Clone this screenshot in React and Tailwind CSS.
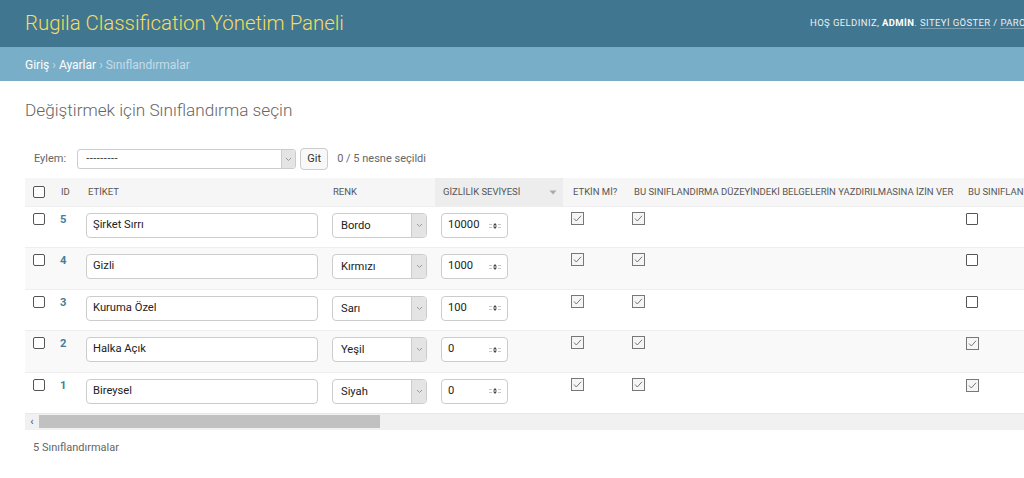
const rows = [
  { id: 5, label: 'Şirket Sırrı', color: 'Bordo', level: '10000', last: false },
  { id: 4, label: 'Gizli', color: 'Kırmızı', level: '1000', last: false },
  { id: 3, label: 'Kuruma Özel', color: 'Sarı', level: '100', last: false },
  { id: 2, label: 'Halka Açık', color: 'Yeşil', level: '0', last: true },
  { id: 1, label: 'Bireysel', color: 'Siyah', level: '0', last: true },
];

function Box() {
  return <div className="w-[12px] h-[12px] border border-[#555] rounded-[2px] bg-white" />;
}

function Checked({ on = true }) {
  if (!on) return <div className="w-[12px] h-[12px] border border-[#555] rounded-[1px] bg-white" />;
  return (
    <svg width="13" height="13" viewBox="0 0 13 13">
      <rect x="0.5" y="0.5" width="12" height="12" fill="#f5f5f5" stroke="#777" />
      <path d="M3 6.5 L5.3 9 L10 3.8" fill="none" stroke="#777" strokeWidth="1" />
    </svg>
  );
}

function Chevron() {
  return (
    <svg width="7" height="5" viewBox="0 0 7 5">
      <path d="M1 1 L3.5 3.5 L6 1" fill="none" stroke="#9a9a9a" strokeWidth="1" />
    </svg>
  );
}

function Spinner() {
  return (
    <svg width="12" height="8" viewBox="0 0 12 8">
      <path d="M4 3.4 L6 1 L8 3.4 Z" fill="#444" />
      <path d="M4 4.6 L6 7 L8 4.6 Z" fill="#444" />
      <rect x="0" y="2" width="3" height="1" fill="#c8c8c8" />
      <rect x="0" y="5" width="3" height="1" fill="#c8c8c8" />
      <rect x="9" y="2" width="3" height="1" fill="#c8c8c8" />
      <rect x="9" y="5" width="3" height="1" fill="#c8c8c8" />
    </svg>
  );
}

export default function App() {
  return (
    <div
      className="w-[1024px] h-[478px] overflow-hidden bg-white text-[#333]"
      style={{ fontFamily: 'Roboto, "Liberation Sans", sans-serif' }}
    >
      {/* Header */}
      <div className="h-[47px] bg-[#417690] flex items-center pl-[25px]">
        <div className="text-[20.4px] font-light text-[#f5dd5d] leading-none whitespace-nowrap">
          Rugila Classification Yönetim Paneli
        </div>
        <div className="ml-auto w-[214px] overflow-hidden whitespace-nowrap text-[9.5px] tracking-[0.4px] uppercase text-[#eeeeee] pb-[1px]">
          HOŞ GELDINIZ, <strong className="font-bold text-white">ADMİN</strong>.{' '}
          <span className="border-b border-[rgba(255,255,255,0.3)]">SITEYİ GÖSTER</span> /{' '}
          <span className="border-b border-[rgba(255,255,255,0.3)]">PAROLAYI DEĞİŞTİR</span> /{' '}
          <span>OTURUMU KAPAT</span>
        </div>
      </div>

      {/* Breadcrumbs */}
      <div className="h-[34px] bg-[#79aec8] flex items-center px-[25px] pt-[1px] text-[12px] text-[#c4dce8] whitespace-nowrap">
        <span className="text-white">Giriş</span>
        <span className="mx-[3px]">›</span>
        <span className="text-white">Ayarlar</span>
        <span className="mx-[3px]">›</span>
        <span>Sınıflandırmalar</span>
      </div>

      {/* Content */}
      <div className="pl-[25px]">
        <h1 className="mt-[17px] h-[24px] leading-[24px] text-[17.2px] font-light text-[#666]">
          Değiştirmek için Sınıflandırma seçin
        </h1>

        {/* Actions */}
        <div className="mt-[26px] h-[22px] flex items-center pl-[9px] text-[11px] text-[#666]">
          <span>Eylem:</span>
          <div className="ml-[11px] w-[219px] h-[20px] border border-[#cccccc] rounded-[3px] flex items-center bg-white">
            <span className="pl-[8px] text-[#333] text-[11px] tracking-[0.5px]">---------</span>
            <div className="ml-auto w-[14px] h-full bg-[#e4e4e4] border-l border-[#cccccc] rounded-r-[3px] flex items-center justify-center">
              <Chevron />
            </div>
          </div>
          <div className="ml-[4px] w-[28px] h-[22px] border border-[#cccccc] rounded-[4px] bg-[#f8f8f8] flex items-center justify-center text-[#333] text-[11px]">
            Git
          </div>
          <span className="ml-[9px]">0 / 5 nesne seçildi</span>
        </div>

        {/* Table */}
        <div className="mt-[8px] w-[999px] overflow-hidden">
          <div className="w-[1140px]">
            <div className="h-[28px] flex bg-[#f6f6f6] text-[9.5px] uppercase text-[#555] whitespace-nowrap">
              <div className="w-[27px] flex items-center pl-[8px]"><Box /></div>
              <div className="w-[28px] flex items-center pl-[9px]">ID</div>
              <div className="w-[245px] flex items-center pl-[8px]">ETİKET</div>
              <div className="w-[110px] flex items-center pl-[8px]">RENK</div>
              <div className="w-[128px] flex items-center pl-[8px] bg-[#ededed] relative">
                GİZLİLİK SEVİYESİ
                <svg className="absolute left-[114px] top-[12px]" width="8" height="5" viewBox="0 0 8 5">
                  <path d="M0.5 0.5 L7.5 0.5 L4 4.5 Z" fill="#aaaaaa" />
                </svg>
              </div>
              <div className="w-[61px] flex items-center pl-[10px]">ETKİN Mİ?</div>
              <div className="w-[334px] flex items-center pl-[10px]">BU SINIFLANDIRMA DÜZEYİNDEKİ BELGELERİN YAZDIRILMASINA İZİN VER</div>
              <div className="w-[200px] flex items-center pl-[10px]">BU SINIFLANDIRMA DÜZEYİNDEKİ</div>
            </div>

            {rows.map((r, i) => (
              <div
                key={r.id}
                className={`h-[41.4px] flex border-t border-[#eeeeee] text-[11.2px] ${i % 2 === 1 ? 'bg-[#f9f9f9]' : 'bg-white'}`}
              >
                <div className="w-[27px] pl-[8px] pt-[6px]"><Box /></div>
                <div className="w-[28px] pl-[8px] pt-[5px] font-bold text-[#447e9b]">{r.id}</div>
                <div className="w-[245px] pl-[6px] pt-[6px]">
                  <div className="w-[232px] h-[25px] border border-[#cccccc] rounded-[4px] bg-white flex items-center pl-[6px] text-[#222]">
                    {r.label}
                  </div>
                </div>
                <div className="w-[110px] pl-[7px] pt-[6px]">
                  <div className="w-[95px] h-[25px] border border-[#cccccc] rounded-[4px] bg-white flex items-center">
                    <span className="pl-[8px] pt-[2px] text-[#222]">{r.color}</span>
                    <div className="ml-auto w-[15px] h-full bg-[#e4e4e4] border-l border-[#cccccc] rounded-r-[4px] flex items-center justify-center">
                      <Chevron />
                    </div>
                  </div>
                </div>
                <div className="w-[128px] pl-[6px] pt-[6px]">
                  <div className="w-[67px] h-[25px] border border-[#cccccc] rounded-[4px] bg-white flex items-center pl-[6px] pr-[6px] text-[#222]">
                    <span>{r.level}</span>
                    <span className="ml-auto flex items-center"><Spinner /></span>
                  </div>
                </div>
                <div className="w-[61px] pl-[8px] pt-[5px]"><Checked /></div>
                <div className="w-[334px] pl-[8px] pt-[5px]"><Checked /></div>
                <div className="w-[200px] pl-[8px] pt-[6px]"><Checked on={r.last} /></div>
              </div>
            ))}
          </div>
        </div>

        {/* Scrollbar */}
        <div className="w-[999px] h-[17px] bg-[#f1f1f1] flex items-center border-t border-[#e8e8e8]">
          <div className="w-[14px] h-full flex items-center justify-center text-[10px] text-[#404040] leading-none">‹</div>
          <div className="w-[341px] h-[13px] bg-[#c1c1c1]" />
        </div>

        <div className="mt-[11px] pl-[8px] text-[11px] leading-[14px] text-[#666]">5 Sınıflandırmalar</div>
      </div>
    </div>
  );
}
